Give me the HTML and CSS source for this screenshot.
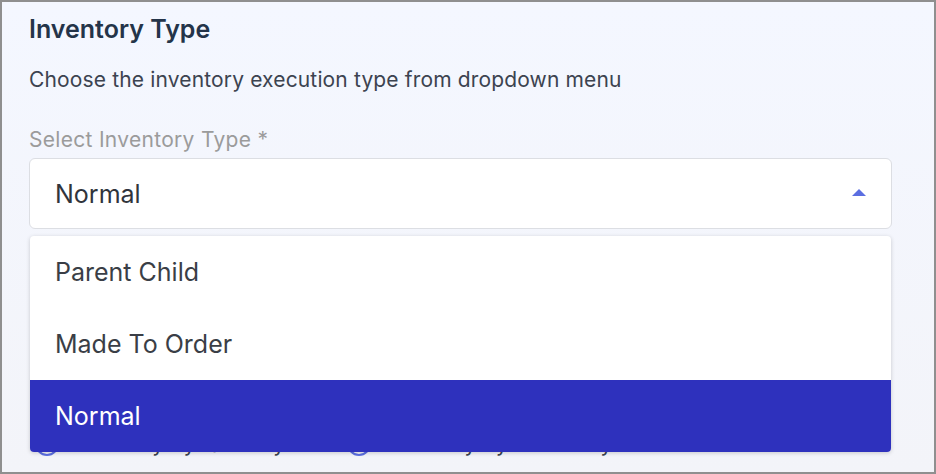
FILE: index.html
```html
<!DOCTYPE html>
<html lang="en">
<head>
  <meta charset="UTF-8" />
  <meta name="viewport" content="width=device-width, initial-scale=1" />
  <title>Inventory Type</title>
  <link rel="stylesheet" href="styles.css">
</head>
<body>

  <div class="frame">
    <section class="panel">
      <h2 class="title">Inventory Type</h2>
      <p class="desc">Choose the inventory execution type from dropdown menu</p>

      <label class="field-label" for="inventoryType">Select Inventory Type *</label>
      <div class="select-wrap">
        <div class="select" id="inventoryType">
          <span>Normal</span>
          <span class="caret"></span>
        </div>

        <ul class="menu">
          <li class="menu-item">Parent Child</li>
          <li class="menu-item">Made To Order</li>
          <li class="menu-item active">Normal</li>
        </ul>
      </div>

      <div class="radios">
        <label class="radio"><span class="dot"></span>Inventory By Quantity</label>
        <label class="radio"><span class="dot"></span>Inventory By Serial Key</label>
      </div>
    </section>
  </div>

</body>
</html>
```

FILE: styles.css
```css
* {
  box-sizing: border-box;
}
body {
  margin: 0;
  font-family: Inter, "Noto Sans", sans-serif;
}
.frame {
  width: 936px;
  height: 474px;
  border: 2px solid #8f8f8f;
  background: linear-gradient(#f4f7ff, #f3f4f9);
  overflow: hidden;
}
.panel {
  padding: 12px 42px 0 27px;
}
.title {
  margin: 0;
  font-size: 25px;
  line-height: 30px;
  font-weight: 600;
  color: #243449;
}
.desc {
  margin: 23px 0 0;
  font-size: 21px;
  line-height: 26px;
  letter-spacing: 0.15px;
  color: #3c4350;
}
.field-label {
  display: block;
  margin-top: 34px;
  font-size: 21px;
  line-height: 26px;
  letter-spacing: 0.3px;
  color: #9b9b9b;
}
.select-wrap {
  position: relative;
  margin-top: 5px;
}
.select {
  height: 71px;
  display: flex;
  align-items: center;
  justify-content: space-between;
  padding: 0 25px 0 25px;
  background: white;
  border: 1px solid #dcdee3;
  border-radius: 6px;
  font-size: 25px;
  color: #30343c;
}
.caret {
  width: 0;
  height: 0;
  border-left: 7px solid transparent;
  border-right: 7px solid transparent;
  border-bottom: 7px solid #5b6ee1;
  margin-top: -2px;
}
.menu {
  position: absolute;
  top: 78px;
  left: 1px;
  right: 1px;
  margin: 0;
  padding: 0;
  list-style: none;
  background: white;
  border-radius: 4px;
  overflow: hidden;
  box-shadow: 0 1px 4px rgba(0, 0, 0, 0.18);
  z-index: 2;
}
.menu-item {
  height: 72px;
  display: flex;
  align-items: center;
  padding-left: 25px;
  font-size: 25px;
  color: #3a3e46;
}
.menu-item.active {
  background: #2e31bd;
  color: white;
}
.radios {
  display: flex;
  gap: 62px;
  margin-top: 202px;
  padding-left: 6px;
}
.radio {
  display: flex;
  align-items: center;
  gap: 12px;
  font-size: 21px;
  color: #3c4350;
}
.dot {
  width: 24px;
  height: 24px;
  border: 2px solid #5b6ee1;
  border-radius: 50%;
}
```
